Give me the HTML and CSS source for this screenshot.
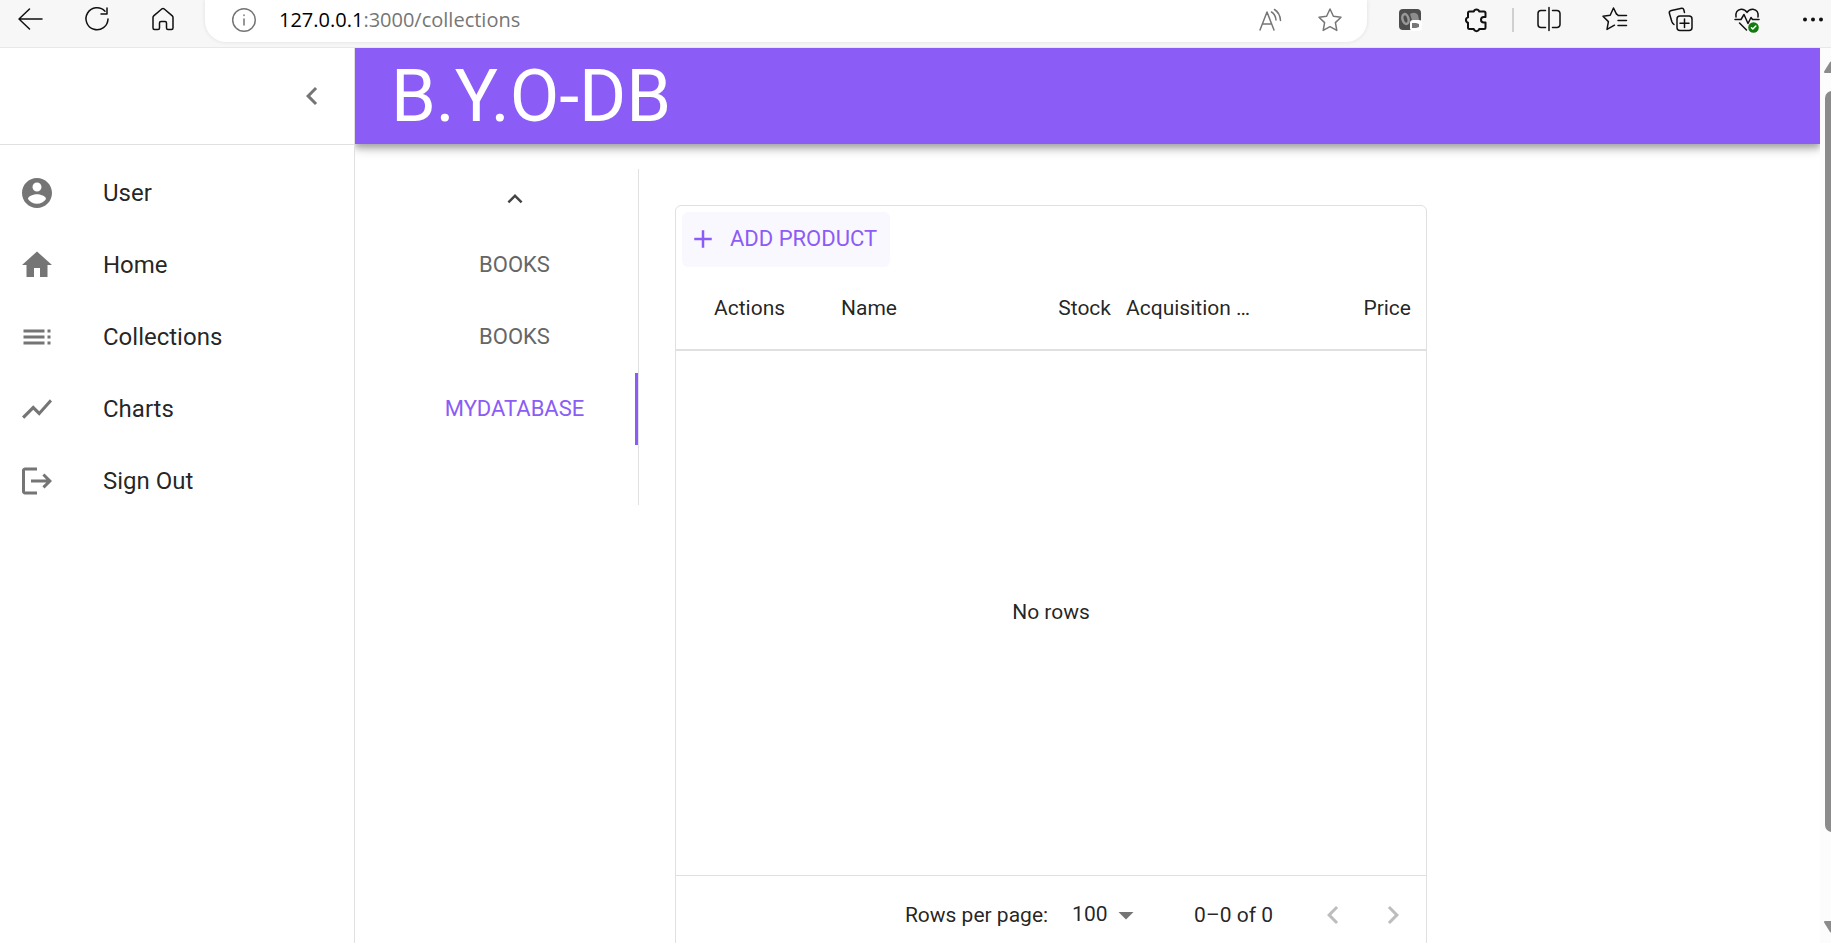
FILE: index.html
```html
<!DOCTYPE html>
<html lang="en">
<head>
<meta charset="utf-8">
<title>B.Y.O-DB</title>
<link rel="stylesheet" href="styles.css">
</head>
<body>
<header class="browser">
  <div class="browser-nav">
    <button class="tool" aria-label="Back"><svg viewBox="0 0 28 28"><path d="M25 14H2M12.500 4 2 14l10.500 10"/></svg></button>
    <button class="tool" aria-label="Refresh"><svg viewBox="0 0 28 28"><path d="M25 14A11 11 0 1 1 22 6.200M24 3v6h-6"/></svg></button>
    <button class="tool" aria-label="Home page"><svg viewBox="0 0 28 28"><path d="M4 12.500q0-1 .7-1.600L13 3.800q1-.8 2 0l8.300 7.100q.7.600.7 1.600V23a1.500 1.500 0 0 1-1.500 1.500H19A1.500 1.500 0 0 1 17.500 23v-5a1.500 1.500 0 0 0-1.500-1.500h-4a1.500 1.500 0 0 0-1.500 1.500v5A1.500 1.500 0 0 1 9 24.500H5.500A1.500 1.500 0 0 1 4 23z"/></svg></button>
  </div>
  <div class="address">
    <button class="tool info" aria-label="Site information"><svg viewBox="0 0 28 28"><circle cx="14" cy="14" r="11.300"/><path d="M14 13v6M14 9v.4"/></svg></button>
    <div class="url"><span class="host">127.0.0.1</span>:3000/collections</div>
    <button class="tool muted" aria-label="Read aloud"><svg viewBox="0 0 28 28"><path d="M3 24 10 6l7 18M5.500 18h9M14.500 6q4 2.500 4.500 8M17.500 3.500q5.500 3.500 6 11"/></svg></button>
    <button class="tool muted" aria-label="Add to favorites"><svg viewBox="0 0 28 28"><path d="m14 3 3.400 7.200 7.600 1-5.600 5.400 1.400 7.800-6.800-3.700-6.800 3.700 1.400-7.800L3 11.200l7.600-1z"/></svg></button>
  </div>
  <div class="browser-tools">
    <button class="tool" aria-label="Extension"><svg viewBox="0 0 28 28" class="plain"><rect x="3" y="4" width="22" height="21" rx="4" fill="#4d4d4d"/><ellipse cx="9.500" cy="14" rx="3" ry="5" fill="none" stroke="#999" stroke-width="2.500" transform="rotate(-15 9.500 14)"/><path d="M14 9q5-3 8 1l1 5h-7z" fill="#8c8c8c"/><rect x="14" y="15" width="12" height="11" rx="3" fill="#fff"/><path d="M16 18h4l3 1v3l-3 1h-4z" fill="#777"/></svg></button>
    <button class="tool" aria-label="Extensions"><svg viewBox="0 0 28 28" class="bold"><path d="M11.800 6.500a2.800 2.800 0 0 1 5.400 0H22q1.500 0 1.500 1.500v4h-1.700a2.800 2.800 0 0 0 0 5.600h1.700v5q0 1.500-1.500 1.500h-4.800a2.800 2.800 0 0 1-5.400 0H7.500Q6 24.100 6 22.600v-4.800a2.800 2.800 0 0 1 0-5.400V8q0-1.500 1.500-1.500z"/></svg></button>
    <span class="divider"></span>
    <button class="tool" aria-label="Split screen"><svg viewBox="0 0 28 28"><path d="M14 2.500v23M10.500 5.500H6A3 3 0 0 0 3 8.500v11a3 3 0 0 0 3 3h4.500M17.500 5.500H22a3 3 0 0 1 3 3v11a3 3 0 0 1-3 3h-4.500"/></svg></button>
    <button class="tool" aria-label="Favorites"><svg viewBox="0 0 28 28"><path d="m16.500 9.500-1-.3L12.500 3 9.200 10.200 2 11.200l5.400 5.400L6 24.400l7.500-4.200M17 10.500h8.500M17 15.500h8.500M17 20.500h8.500"/></svg></button>
    <button class="tool" aria-label="Collections"><svg viewBox="0 0 28 28"><rect x="10" y="11" width="15" height="14.500" rx="3"/><path d="M17.500 14v8.500M13 18.200h9M17.500 7.500l-.8-3q-.5-1.500-2-1.200L4.500 5.500Q2 6 2.300 8l2.500 8.500q.7 2 2.200 3"/></svg></button>
    <button class="tool" aria-label="Browser essentials"><svg viewBox="0 0 28 28"><path d="M3 12Q2 5 8 4.200q4-.2 6 3.300 2-3.500 6-3.300 6 .8 5 7.800M2 14.500h6l3-5 4 9 3-6 1.500 2H26M6.500 18l7 7"/><circle cx="20.500" cy="22.500" r="5.300" fill="#107c10" stroke="none"/><path d="m18.500 22.800 1.300 1.200 3-3" stroke="#fff"/></svg></button>
    <button class="tool" aria-label="More"><svg viewBox="0 0 28 28" class="plain"><circle cx="6" cy="14.500" r="2"/><circle cx="14" cy="14.500" r="2"/><circle cx="22" cy="14.500" r="2"/></svg></button>
  </div>
</header>
<div class="viewport">
  <aside class="sidebar">
    <div class="sidebar-head"><button class="icon-button" aria-label="Collapse menu"><svg class="mi" viewBox="0 0 24 24"><path d="M15.410 7.410 14 6l-6 6 6 6 1.410-1.410L10.830 12z"/></svg></button></div>
    <nav class="menu">
      <a href="#"><svg class="mi" viewBox="0 0 24 24"><path d="M12 2C6.480 2 2 6.480 2 12s4.480 10 10 10 10-4.480 10-10S17.520 2 12 2zm0 3c1.660 0 3 1.340 3 3s-1.340 3-3 3-3-1.340-3-3 1.340-3 3-3zm0 14.200c-2.500 0-4.710-1.280-6-3.220.030-1.990 4-3.080 6-3.080 1.990 0 5.970 1.090 6 3.080-1.290 1.940-3.500 3.220-6 3.220z"/></svg>User</a>
      <a href="#"><svg class="mi" viewBox="0 0 24 24"><path d="M10 20v-6h4v6h5v-8h3L12 3 2 12h3v8z"/></svg>Home</a>
      <a href="#"><svg class="mi" viewBox="0 0 24 24"><path d="M3 9h14V7H3v2zm0 4h14v-2H3v2zm0 4h14v-2H3v2zm16 0h2v-2h-2v2zm0-10v2h2V7h-2zm0 6h2v-2h-2v2z"/></svg>Collections</a>
      <a href="#"><svg class="mi" viewBox="0 0 24 24"><path d="m3.500 18.490 6-6.010 4 4L22 6.920l-1.410-1.410-7.090 7.970-4-4L2 16.990z"/></svg>Charts</a>
      <a href="#"><svg class="mi" viewBox="0 0 24 24"><path d="m17 7-1.410 1.410L18.170 11H8v2h10.170l-2.580 2.580L17 17l5-5zM4 5h8V3H4c-1.100 0-2 .9-2 2v14c0 1.100.9 2 2 2h8v-2H4V5z"/></svg>Sign Out</a>
    </nav>
  </aside>
  <div class="page">
    <div class="appbar"><h1>B.Y.O-DB</h1></div>
    <main class="content">
      <div class="tabs">
        <button class="tab-scroll" aria-label="Scroll up"><svg viewBox="0 0 24 24"><path d="M7.410 15.410 12 10.830l4.590 4.580L18 14l-6-6-6 6z"/></svg></button>
        <button class="tab">BOOKS</button>
        <button class="tab">BOOKS</button>
        <button class="tab selected">MYDATABASE</button>
      </div>
      <section class="grid">
        <div class="grid-toolbar"><button class="add"><svg viewBox="0 0 24 24"><path d="M19 13h-6v6h-2v-6H5v-2h6V5h2v6h6z"/></svg>ADD PRODUCT</button></div>
        <table class="table">
          <colgroup><col class="c-actions"><col class="c-name"><col class="c-stock"><col class="c-date"><col></colgroup>
          <thead><tr><th class="actions">Actions</th><th>Name</th><th class="num">Stock</th><th class="date">Acquisition …</th><th class="num">Price</th></tr></thead>
          <tbody><tr><td colspan="5">No rows</td></tr></tbody>
        </table>
        <footer class="pager">
          <label for="rows">Rows per page:</label>
          <div class="select"><select id="rows"><option>100</option></select><svg class="mi" viewBox="0 0 24 24"><path d="m7 10 5 5 5-5z"/></svg></div>
          <span class="count">0–0 of 0</span>
          <button class="page-button" aria-label="Previous page" disabled><svg class="mi" viewBox="0 0 24 24"><path d="M15.410 16.590 10.830 12l4.580-4.590L14 6l-6 6 6 6z"/></svg></button>
          <button class="page-button" aria-label="Next page" disabled><svg class="mi" viewBox="0 0 24 24"><path d="M8.590 16.590 13.170 12 8.590 7.410 10 6l6 6-6 6z"/></svg></button>
        </footer>
      </section>
    </main>
  </div>
  <div class="scrollbar" aria-hidden="true">
    <svg class="arrow" viewBox="0 0 14 12"><path d="M1 12Q-1 12 1 9L6 1Q7 0 8 1l5 8q2 3 0 3z"/></svg>
    <span class="thumb"></span>
    <svg class="arrow" viewBox="0 0 14 12"><path d="M1 0Q-1 0 1 3l5 8q1 1 2 0l5-8q2-3 0-3z"/></svg>
  </div>
</div>
</body>
</html>
```
FILE: styles.css
```css
* { box-sizing: border-box; }
html, body { height: 100%; }
body {
  margin: 0;
  display: flex;
  flex-direction: column;
  overflow: hidden;
  background: #fff;
  color: rgba(0, 0, 0, .87);
  font-family: Roboto, "Liberation Sans", sans-serif;
}
button {
  border: 0;
  padding: 0;
  margin: 0;
  background: none;
  color: inherit;
  font: inherit;
}
svg { display: block; fill: currentColor; }
.mi { width: 36px; height: 36px; flex: none; color: #757575; }

.browser {
  flex: none;
  height: 48px;
  display: flex;
  align-items: flex-start;
  background: #f7f7f7;
  border-bottom: 1px solid #e8e8e8;
}
.tool { width: 28px; height: 28px; flex: none; color: #111; }
.tool svg {
  width: 28px;
  height: 28px;
  fill: none;
  stroke: currentColor;
  stroke-width: 1.5;
  stroke-linecap: round;
  stroke-linejoin: round;
}
.tool svg.bold { stroke-width: 2; }
.tool svg.plain { fill: currentColor; stroke: none; }
.muted, .info { color: #767676; }
.browser-nav { display: flex; gap: 38px; padding: 5px 28px 0 17px; }
.address {
  flex: 1;
  height: 42px;
  display: flex;
  align-items: center;
  gap: 31px;
  padding: 1px 23px 4px 25px;
  background: #fff;
  border-radius: 0 0 21px 21px;
  box-shadow: 0 0 4px rgba(0, 0, 0, .1);
}
.url {
  flex: 1;
  margin-left: -10px;
  color: #767676;
  font: 20px/28px "Open Sans", "Noto Sans", sans-serif;
}
.host { color: #000; }
.browser-tools { display: flex; gap: 38px; padding: 5px 4px 0 29px; }
.divider { width: 2px; height: 24px; margin: 3px -17px 0 -16px; background: #d0d0d0; }

.viewport { flex: 1; min-height: 0; display: flex; }
.sidebar { flex: none; width: 355px; border-right: 1px solid #e0e0e0; }
.sidebar-head {
  height: 97px;
  display: flex;
  align-items: center;
  justify-content: flex-end;
  padding-right: 24px;
  border-bottom: 1px solid #e0e0e0;
}
.menu { padding-top: 12px; }
.menu a {
  height: 72px;
  display: flex;
  align-items: center;
  gap: 48px;
  padding-left: 19px;
  color: inherit;
  font-size: 24px;
  line-height: 36px;
  text-decoration: none;
}
.page { flex: 1; min-width: 0; display: flex; flex-direction: column; overflow: hidden; }
.appbar {
  flex: none;
  height: 96px;
  display: flex;
  align-items: center;
  padding: 2px 36px 0;
  background: #8b5cf6;
  color: #fff;
  box-shadow: 0 3px 6px rgba(0, 0, 0, .2), 0 6px 8px rgba(0, 0, 0, .14), 0 2px 15px rgba(0, 0, 0, .12);
}
.appbar h1 { margin: 0; font-size: 72px; font-weight: 400; line-height: 84px; }
.content { display: flex; align-items: flex-start; padding: 25px 36px 0; }
.tabs {
  flex: none;
  width: 248px;
  height: 336px;
  display: flex;
  flex-direction: column;
  border-right: 1px solid #e0e0e0;
}
.tab-scroll { height: 60px; display: flex; align-items: center; justify-content: center; color: #444; }
.tab-scroll svg { width: 30px; height: 30px; }
.tab { height: 72px; color: #666; font-size: 22px; line-height: 26px; border-right: 3px solid transparent; border-left: 3px solid transparent; }
.tab.selected { color: #8b5cf6; border-right-color: #8b5cf6; }
.grid {
  flex: none;
  width: 752px;
  margin: 36px 0 0 36px;
  border: 1px solid #e0e0e0;
  border-radius: 6px;
}
.grid-toolbar { padding: 6px 6px 0; }
.add {
  height: 55px;
  display: flex;
  align-items: center;
  gap: 12px;
  padding: 0 13px 2px 6px;
  border-radius: 6px;
  background: #faf8ff;
  color: #8b5cf6;
  font-size: 22px;
  line-height: 36px;
}
.add svg { width: 30px; height: 30px; }
.table { width: 100%; table-layout: fixed; border-collapse: collapse; font-size: 21px; line-height: 30px; }
.c-actions, .c-name, .c-stock, .c-date { width: 150px; }
.table th {
  height: 83px;
  padding: 0 15px;
  border-bottom: 2px solid #e0e0e0;
  font-weight: 400;
  text-align: left;
  white-space: nowrap;
}
.table th.actions { padding-left: 38px; }
.table th.date { padding-left: 0; }
.table th.num { text-align: right; }
.table td { height: 525px; padding: 0 0 2px; text-align: center; }
.pager {
  height: 78px;
  display: flex;
  align-items: center;
  justify-content: flex-end;
  padding-right: 3px;
  border-top: 1px solid #e0e0e0;
  font-size: 21px;
  line-height: 30px;
}
.select { display: flex; align-items: center; margin: 0 50px 0 24px; }
.select select {
  appearance: none;
  border: 0;
  padding: 0 0 2px;
  background: none;
  color: inherit;
  font: inherit;
}
.count { margin-right: 30px; }
.page-button { width: 60px; height: 60px; display: flex; align-items: center; justify-content: center; }
.page-button .mi { color: #bdbdbd; }

.scrollbar {
  flex: none;
  width: 11px;
  display: flex;
  flex-direction: column;
  align-items: flex-start;
  padding: 13px 0 10px 4px;
  overflow: hidden;
  background: #fcfcfc;
}
.arrow { width: 14px; height: 12px; flex: none; color: #8b8b8b; }
.thumb { flex: none; width: 14px; height: 85%; margin: 18px 0 auto 1px; border-radius: 7px; background: #8b8b8b; }
```
